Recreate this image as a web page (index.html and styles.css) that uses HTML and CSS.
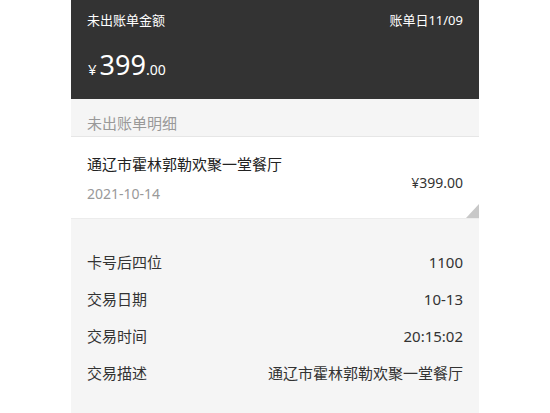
FILE: index.html
```html
<!DOCTYPE html>
<html lang="zh-CN">
<head>
<meta charset="utf-8">
<title>未出账单</title>
<link rel="stylesheet" href="styles.css">
</head>
<body>
<div class="page">
  <header class="summary">
    <div class="summary-top">
      <span>未出账单金额</span>
      <span>账单日11/09</span>
    </div>
    <div class="summary-amount"><span class="cur">¥</span><span class="int">399</span><span class="dec">.00</span></div>
  </header>
  <div class="section-title">未出账单明细</div>
  <div class="item">
    <div class="item-main">
      <div class="item-name">通辽市霍林郭勒欢聚一堂餐厅</div>
      <div class="item-date">2021-10-14</div>
    </div>
    <div class="item-price">¥399.00</div>
    <span class="fold"></span>
  </div>
  <div class="details">
    <div class="row"><span>卡号后四位</span><span>1100</span></div>
    <div class="row"><span>交易日期</span><span>10-13</span></div>
    <div class="row"><span>交易时间</span><span>20:15:02</span></div>
    <div class="row"><span>交易描述</span><span>通辽市霍林郭勒欢聚一堂餐厅</span></div>
  </div>
</div>
</body>
</html>
```

FILE: styles.css
```css
html, body {
  margin: 0;
  padding: 0;
  background: #ffffff;
}
body {
  font-family: "Noto Sans", "Noto Sans CJK SC", sans-serif;
  color: #333333;
}
.page {
  width: 408px;
  margin: 0 auto;
  min-height: 413px;
  display: flex;
  flex-direction: column;
}
.summary {
  background: #333333;
  color: #ffffff;
  height: 99px;
  padding: 0 16px;
  box-sizing: border-box;
  display: flex;
  flex-direction: column;
}
.summary-top {
  height: 40px;
  display: flex;
  justify-content: space-between;
  align-items: center;
  font-size: 13px;
  line-height: 18px;
}
.summary-amount {
  margin-top: 9px;
  line-height: 32px;
  padding-left: 1px;
}
.summary-amount .cur {
  font-size: 15px;
  margin-right: 3px;
}
.summary-amount .int {
  font-size: 27px;
}
.summary-amount .dec {
  font-size: 14px;
}
.section-title {
  background: #f5f5f5;
  color: #999999;
  font-size: 15px;
  line-height: 20px;
  padding: 14px 16px 3px;
  border-bottom: 1px solid #e6e6e6;
}
.item {
  position: relative;
  display: flex;
  justify-content: space-between;
  padding: 16px 16px 14px;
  background: #ffffff;
}
.item-name {
  font-size: 15px;
  line-height: 22px;
  color: #222222;
}
.item-date {
  margin-top: 9px;
  font-size: 14px;
  line-height: 20px;
  color: #999999;
}
.item-price {
  align-self: flex-end;
  margin-bottom: 11px;
  font-size: 14px;
  line-height: 20px;
  color: #333333;
}
.fold {
  position: absolute;
  right: 0;
  bottom: 0;
  width: 0;
  height: 0;
  border-style: solid;
  border-width: 0 0 14px 13px;
  border-color: transparent transparent #c8c8c8 transparent;
}
.details {
  flex: 1;
  background: #f5f5f5;
  padding: 24px 16px 0;
  border-top: 1px solid #ececec;
}
.row {
  display: flex;
  justify-content: space-between;
  align-items: center;
  height: 37px;
  line-height: 22px;
  font-size: 15px;
  color: #333333;
}
```
